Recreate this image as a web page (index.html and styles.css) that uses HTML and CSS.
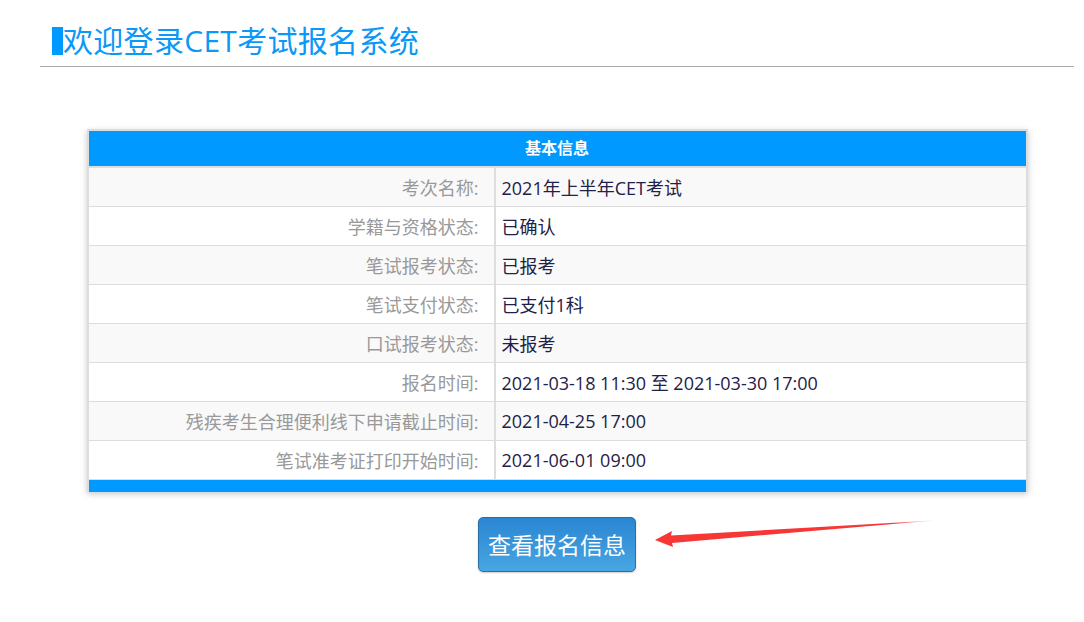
FILE: index.html
```html
<!DOCTYPE html>
<html lang="zh-CN">
<head>
<meta charset="utf-8">
<title>欢迎登录CET考试报名系统</title>
<link rel="stylesheet" href="styles.css">
</head>
<body>
<div class="page">
  <header class="title">
    <span class="title-bar"></span>
    <h1>欢迎登录CET考试报名系统</h1>
  </header>

  <section class="panel">
    <div class="panel-head">基本信息</div>
    <table class="info">
      <tbody>
        <tr><th>考次名称:</th><td>2021年上半年CET考试</td></tr>
        <tr><th>学籍与资格状态:</th><td>已确认</td></tr>
        <tr><th>笔试报考状态:</th><td>已报考</td></tr>
        <tr class="group-end"><th>笔试支付状态:</th><td>已支付1科</td></tr>
        <tr><th>口试报考状态:</th><td>未报考</td></tr>
        <tr><th>报名时间:</th><td>2021-03-18 11:30 至 2021-03-30 17:00</td></tr>
        <tr><th>残疾考生合理便利线下申请截止时间:</th><td>2021-04-25 17:00</td></tr>
        <tr><th>笔试准考证打印开始时间:</th><td>2021-06-01 09:00</td></tr>
      </tbody>
    </table>
    <div class="panel-foot"></div>
  </section>

  <div class="actions">
    <button class="btn" type="button">查看报名信息</button>
  </div>

  <svg class="arrow" width="290" height="40" viewBox="0 0 290 40" aria-hidden="true">
    <defs>
      <linearGradient id="fade" x1="0" y1="0" x2="1" y2="0">
        <stop offset="0" stop-color="#f73636" stop-opacity="1"/>
        <stop offset="0.85" stop-color="#f73636" stop-opacity="1"/>
        <stop offset="1" stop-color="#f73636" stop-opacity="0.25"/>
      </linearGradient>
    </defs>
    <polygon points="5,25 22,16 21,20.5 284,5.5 22,28 23,32" fill="url(#fade)"/>
  </svg>
</div>
</body>
</html>
```

FILE: styles.css
```css
html, body {
  margin: 0;
  padding: 0;
  background: #fff;
}

body {
  font-family: "Open Sans", "Noto Sans CJK SC", sans-serif;
}

.page {
  position: relative;
  padding: 0 10px 40px 40px;
  height: 622px;
  box-sizing: border-box;
}

.title {
  display: flex;
  align-items: center;
  padding: 27px 0 11px 12px;
  border-bottom: 1px solid #aaaaaa;
}

.title-bar {
  width: 11px;
  height: 28px;
  background: #0099ff;
  flex: none;
}

.title h1 {
  margin: 0;
  font-size: 30px;
  line-height: 28px;
  font-weight: normal;
  color: #0b98f7;
  letter-spacing: 0.3px;
}

.panel {
  width: 941px;
  box-sizing: border-box;
  margin: 62px auto 0;
  border: 2px solid #dddddd;
  border-bottom: 0;
  box-shadow: 0 2px 6px rgba(0, 0, 0, 0.22);
}

.panel-head {
  height: 35px;
  line-height: 35px;
  background: #0099ff;
  color: #fff;
  text-align: center;
  font-size: 16px;
  font-weight: bold;
  border-bottom: 2px solid #dddddd;
}

.info {
  width: 100%;
  border-collapse: collapse;
  font-size: 18px;
}

.info tr {
  height: 39px;
  border-bottom: 1px solid #dddddd;
}

.info tr:first-child {
  height: 38px;
}

.info tr:nth-child(odd) {
  background: #f9f9f9;
}

.info tr:nth-child(even) {
  background: #ffffff;
}

.info th {
  width: 390px;
  padding: 0 15px 0 0;
  text-align: right;
  font-weight: normal;
  color: #999999;
}

.info td {
  padding: 0 0 0 6px;
  border-left: 2px solid #dddddd;
  color: #1f2147;
}

.panel-foot {
  height: 12px;
  background: #0099ff;
}

.actions {
  display: flex;
  justify-content: center;
  margin-top: 25px;
}

.btn {
  font-family: "Noto Sans CJK SC", sans-serif;
  font-size: 23px;
  line-height: 33px;
  padding: 10px 9px;
  color: #fff;
  background: linear-gradient(#2a86d2, #48a6e2);
  border: 1px solid #2b6ea5;
  border-radius: 5px;
  box-shadow: 0 1px 2px rgba(0, 0, 0, 0.2);
  cursor: pointer;
}

.arrow {
  position: absolute;
  left: 650px;
  top: 515px;
}
```
